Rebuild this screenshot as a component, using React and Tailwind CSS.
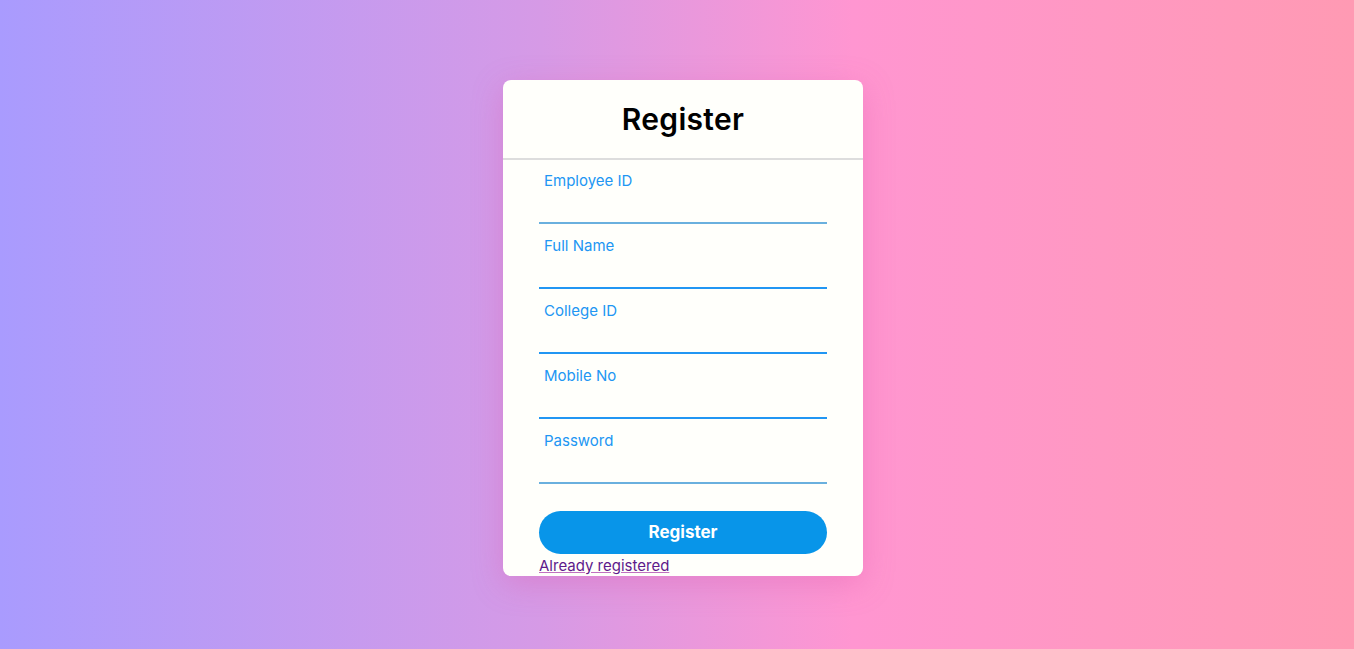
import React from 'react';

const fields = [
  { label: 'Employee ID', line: 'border-[#6ab0de]' },
  { label: 'Full Name', line: 'border-[#2196f3]' },
  { label: 'College ID', line: 'border-[#2196f3]' },
  { label: 'Mobile No', line: 'border-[#2196f3]' },
  { label: 'Password', line: 'border-[#6ab0de]' },
];

const App = () => (
  <div
    className="h-screen w-full flex items-start justify-center pt-[80px] pl-[12px] bg-[linear-gradient(90deg,#a99bfe_0%,#d69ae6_40%,#ff96d1_63%,#ff9ab3_100%)]"
    style={{ fontFamily: 'Inter, "Noto Sans", sans-serif' }}
  >
    <div className="w-[360px] bg-[#fffffb] rounded-lg shadow-[0_8px_30px_rgba(220,90,170,0.35)] overflow-hidden">
      <div className="h-[80px] flex items-center justify-center border-b-2 border-[#dddddd]">
        <h1 className="text-[30px] font-semibold text-black tracking-[0.3px]">Register</h1>
      </div>
      <form className="px-9 pt-[11px]">
        {fields.map((f) => (
          <div key={f.label} className="h-[65px] flex flex-col">
            <label className="pl-[5px] h-[20px] text-[15px] leading-[20px] text-[#2196f3]">{f.label}</label>
            <input
              type={f.label === 'Password' ? 'password' : 'text'}
              className={`h-[33px] w-full bg-transparent outline-none border-b-2 ${f.line}`}
            />
          </div>
        ))}
        <button
          type="button"
          className="mt-[15px] w-full h-[43px] rounded-full bg-[#0895e9] text-white text-[17px] font-bold"
        >
          Register
        </button>
        <a href="#" className="block mt-[2px] h-[20px] text-[15px] leading-[20px] text-[#5e1a8b] underline decoration-[#c070c0]">
          Already registered
        </a>
      </form>
    </div>
  </div>
);

export default App;
